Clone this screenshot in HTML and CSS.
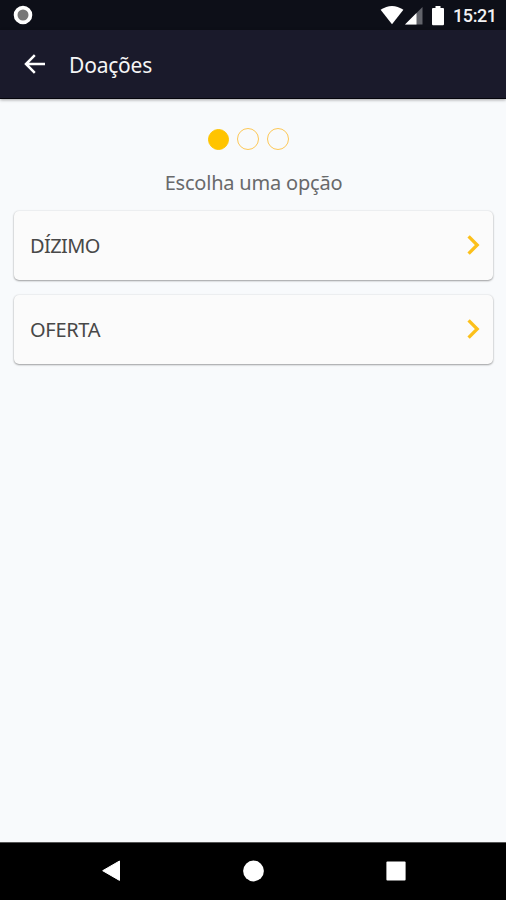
FILE: index.html
```html
<!DOCTYPE html>
<html lang="pt-BR">
<head>
<meta charset="utf-8">
<title>Doações</title>
<link rel="stylesheet" href="styles.css">
</head>
<body>
<div class="status">
  <svg class="record" width="20" height="20" viewBox="0 0 20 20"><circle cx="10" cy="10" r="7.4" fill="#777" stroke="#fff" stroke-width="3.8"/></svg>
  <svg class="wifi" width="24" height="20" viewBox="0 0 24 20"><path d="M0.6 4.8Q12 -2.9 23.4 4.8L12 19.2Z" fill="#fff"/></svg>
  <svg class="signal" width="18" height="18" viewBox="0 0 18 18"><path d="M17.5 0V17.5H0Z" fill="#62646b"/><path d="M11.5 6V17.5H0Z" fill="#fff"/></svg>
  <svg class="battery" width="12" height="20" viewBox="0 0 12 20"><path d="M3.5 0H8.5V2H11Q12 2 12 3V18Q12 19.3 11 19.3H1Q0 19.3 0 18V3Q0 2 1 2H3.5Z" fill="#fff"/></svg>
  <span class="time">15:21</span>
</div>
<header class="appbar">
  <svg class="back" width="22" height="20" viewBox="0 0 22 20"><path d="M21 10H2.5M10.8 1.2L2 10L10.8 18.8" fill="none" stroke="#fff" stroke-width="2.5"/></svg>
  <h1 class="title">Doações</h1>
</header>
<main class="content">
  <div class="steps"><i class="step active"></i><i class="step"></i><i class="step"></i></div>
  <p class="prompt">Escolha uma opção</p>
  <div class="options">
    <div class="option"><span class="dizimo">DÍZIMO</span><svg width="13" height="20" viewBox="0 0 13 20"><path d="M1.6 1.4L10.2 10L1.6 18.6" fill="none" stroke="#fcc01b" stroke-width="3.3"/></svg></div>
    <div class="option"><span class="oferta">OFERTA</span><svg width="13" height="20" viewBox="0 0 13 20"><path d="M1.6 1.4L10.2 10L1.6 18.6" fill="none" stroke="#fcc01b" stroke-width="3.3"/></svg></div>
  </div>
</main>
<nav class="navbar">
  <svg width="20" height="22" viewBox="0 0 20 22"><path d="M18.5 1V20.4L1.7 10.7Z" fill="#fff" stroke="#fff" stroke-linejoin="round"/></svg>
  <svg width="22" height="22" viewBox="0 0 22 22"><circle cx="10.5" cy="11" r="10.4" fill="#fff"/></svg>
  <svg width="20" height="22" viewBox="0 0 20 22"><rect x=".4" y="1.4" width="19.2" height="19.2" rx="1" fill="#fff"/></svg>
</nav>
</body>
</html>
```

FILE: styles.css
```css
* { box-sizing: border-box; }
body {
  margin: 0;
  height: 900px;
  display: flex;
  flex-direction: column;
  overflow: hidden;
  background: #f8fafc;
  font-family: "Noto Sans", "Open Sans", sans-serif;
}
svg { display: block; flex: none; }
.status {
  height: 30px;
  flex: none;
  display: flex;
  align-items: flex-start;
  padding: 5px 10px 0 13px;
  background: #0d0f18;
}
.wifi { margin: 0 0 0 347px; }
.signal { margin: 2px 0 0 1px; }
.battery { margin: 1px 0 0 9px; }
.time {
  margin-left: 9px;
  font: 500 18px/22px Roboto, sans-serif;
  letter-spacing: -.4px;
  color: #f2f2f3;
}
.appbar {
  height: 69px;
  flex: none;
  display: flex;
  align-items: center;
  padding-left: 24px;
  background: #1a1a2b;
  border-bottom: 1px solid #05050c;
  box-shadow: 0 1px 3px rgba(0, 0, 0, .35);
}
.title {
  margin: 2px 0 0 23px;
  font-size: 21px;
  font-weight: 400;
  line-height: 30px;
  letter-spacing: -.2px;
  color: #f5f5f6;
}
.content { flex: 1; padding: 29px 13px 0 14px; }
.steps {
  display: flex;
  align-items: center;
  justify-content: center;
  gap: 8px;
  height: 22px;
  margin-right: 10px;
}
.step {
  width: 22px;
  height: 22px;
  border: 1.5px solid #fdc857;
  border-radius: 50%;
}
.step.active {
  width: 21px;
  height: 21px;
  background: #ffc400;
  border-color: #ffc400;
}
.prompt {
  margin: 19px 0 14px;
  text-align: center;
  font-size: 20px;
  line-height: 28px;
  letter-spacing: -.2px;
  color: #68696b;
}
.options { display: grid; gap: 15px; }
.option {
  height: 69px;
  display: flex;
  align-items: center;
  justify-content: space-between;
  padding: 0 13px 1px 16px;
  background: #fbfbfb;
  border-radius: 5px;
  box-shadow: 0 1px 2px rgba(0, 0, 0, .35), 0 0 2px rgba(0, 0, 0, .12);
  font-size: 20px;
  color: #484848;
}
.dizimo { letter-spacing: -.6px; }
.oferta { letter-spacing: -.3px; }
.navbar {
  height: 58px;
  flex: none;
  display: flex;
  justify-content: space-between;
  padding: 17px 100px 0 101px;
  background: #000;
  border-top: 1px solid #555;
}
```
